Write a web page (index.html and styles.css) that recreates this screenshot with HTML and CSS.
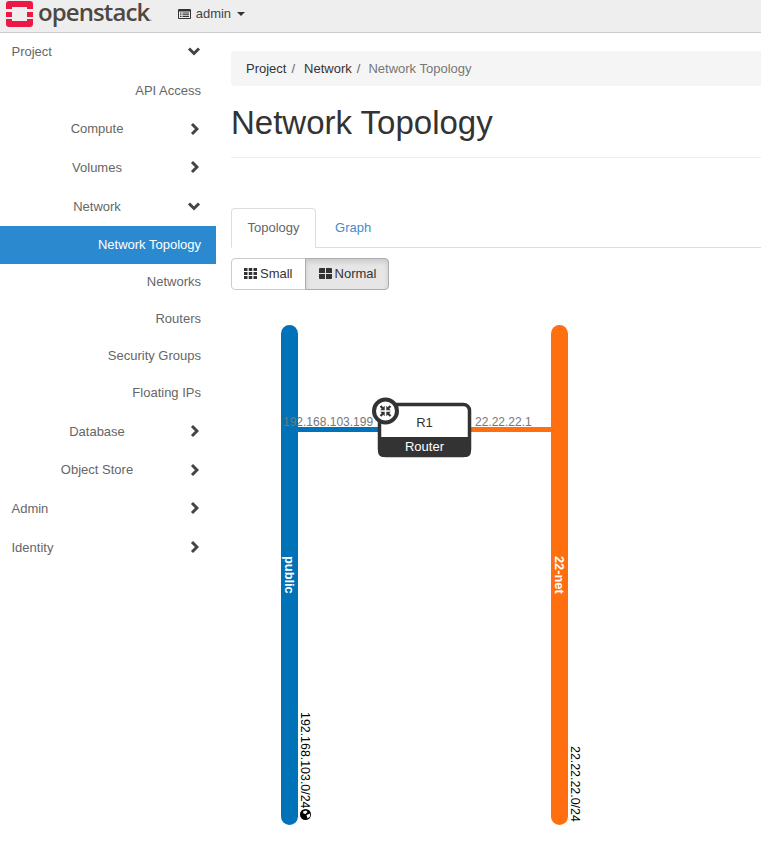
FILE: index.html
```html
<!DOCTYPE html>
<html lang="en">

<head>
    <meta charset="UTF-8">
    <meta name="viewport" content="width=device-width, initial-scale=1.0">
    <title>Network Topology</title>

    <link rel="stylesheet" href="styles.css">
</head>

<body>
    <header class="navbar">
        <svg class="logo-mark" width="27" height="26" viewBox="0 0 27 26">
            <path fill="#ed1944" d="M3 0H24Q27 0 27 3V8H21V6H6V8H0V3Q0 0 3 0ZM0 11H6V16H0ZM21 11H27V16H21ZM0 18H6V20H21V18H27V23Q27 26 24 26H3Q0 26 0 23Z"/>
        </svg>
        <span class="logo-text">openstack<small>.</small></span>
        <a class="project-menu" href="#">
            <svg width="13" height="10" viewBox="0 0 13 10">
                <path fill="#333" fill-rule="evenodd" d="M1 0H12Q13 0 13 1V9Q13 10 12 10H1Q0 10 0 9V1Q0 0 1 0ZM1 2.500V9H12V2.500ZM2 3.500H3.500V4.500H2ZM4.500 3.500H11V4.500H4.500ZM2 5.250H3.500V6.250H2ZM4.500 5.250H11V6.250H4.500ZM2 7H3.500V8H2ZM4.500 7H11V8H4.500Z"/>
            </svg>
            <span>admin</span>
            <i class="caret"></i>
        </a>
    </header>

    <div class="page">
        <nav class="sidebar">
            <a class="nav-row top first" href="#">Project <svg class="chev down" width="14" height="10" viewBox="0 0 14 10"><path d="M2 2.500L7 7.500L12 2.500"/></svg></a>
            <a class="nav-row leaf" href="#">API Access</a>
            <a class="nav-row group" href="#"><span>Compute</span> <svg class="chev right" width="10" height="14" viewBox="0 0 10 14"><path d="M3 2L8 7L3 12"/></svg></a>
            <a class="nav-row group" href="#"><span>Volumes</span> <svg class="chev right" width="10" height="14" viewBox="0 0 10 14"><path d="M3 2L8 7L3 12"/></svg></a>
            <a class="nav-row group" href="#"><span>Network</span> <svg class="chev down" width="14" height="10" viewBox="0 0 14 10"><path d="M2 2.500L7 7.500L12 2.500"/></svg></a>
            <a class="nav-sub active" href="#">Network Topology</a>
            <a class="nav-sub" href="#">Networks</a>
            <a class="nav-sub" href="#">Routers</a>
            <a class="nav-sub" href="#">Security Groups</a>
            <a class="nav-sub" href="#">Floating IPs</a>
            <a class="nav-row group" href="#"><span>Database</span> <svg class="chev right" width="10" height="14" viewBox="0 0 10 14"><path d="M3 2L8 7L3 12"/></svg></a>
            <a class="nav-row group" href="#"><span>Object Store</span> <svg class="chev right" width="10" height="14" viewBox="0 0 10 14"><path d="M3 2L8 7L3 12"/></svg></a>
            <a class="nav-row top" href="#">Admin <svg class="chev right" width="10" height="14" viewBox="0 0 10 14"><path d="M3 2L8 7L3 12"/></svg></a>
            <a class="nav-row top" href="#">Identity <svg class="chev right" width="10" height="14" viewBox="0 0 10 14"><path d="M3 2L8 7L3 12"/></svg></a>
        </nav>

        <main class="content">
            <ol class="breadcrumb">
                <li>Project</li>
                <li>Network</li>
                <li class="current">Network Topology</li>
            </ol>

            <h1 class="page-title">Network Topology</h1>

            <ul class="tabs">
                <li class="tab selected">Topology</li>
                <li class="tab">Graph</li>
            </ul>

            <div class="btn-group">
                <button type="button" class="btn">
                    <svg width="13" height="11" viewBox="0 0 13 11">
                        <path fill="#333" d="M0 0H3.500V3H0ZM4.750 0H8.250V3H4.750ZM9.500 0H13V3H9.500ZM0 4H3.500V7H0ZM4.750 4H8.250V7H4.750ZM9.500 4H13V7H9.500ZM0 8H3.500V11H0ZM4.750 8H8.250V11H4.750ZM9.500 8H13V11H9.500Z"/>
                    </svg>
                    Small
                </button>
                <button type="button" class="btn pressed">
                    <svg width="13" height="11" viewBox="0 0 13 11">
                        <path fill="#333" d="M1 0H6V5H0V1Q0 0 1 0ZM7 0H12Q13 0 13 1V5H7ZM0 6H6V11H1Q0 11 0 10ZM7 6H13V10Q13 11 12 11H7Z"/>
                    </svg>
                    Normal
                </button>
            </div>

            <svg class="topology" width="530" height="540" viewBox="231 290 530 540">
                <rect x="298" y="427" width="82" height="5" fill="#0072b8"/>
                <rect x="470" y="427" width="81" height="5" fill="#ff6e0f"/>

                <rect x="281" y="325" width="17" height="500" rx="8.500" fill="#0072b8"/>
                <rect x="551" y="325" width="17" height="500" rx="8.500" fill="#ff6e0f"/>

                <text class="net-name" transform="translate(285 556) rotate(90)">public</text>
                <text class="net-name" transform="translate(555 556) rotate(90)">22-net</text>

                <text class="cidr" transform="translate(301 712) rotate(90)">192.168.103.0/24</text>
                <text class="cidr" transform="translate(571 746) rotate(90)">22.22.22.0/24</text>

                <circle cx="305.500" cy="814.500" r="5.500" fill="#000"/>
                <path fill="#fff" d="M303 811.500L306 810.500L307.500 812L305.500 814L303.500 813.500ZM306.500 815L310 813.500L310 816.500L307.500 818.500Z"/>

                <text class="port-ip" x="283" y="426">192.168.103.199</text>
                <text class="port-ip" x="475" y="426">22.22.22.1</text>

                <rect x="379.500" y="404.500" width="90" height="51" rx="6" fill="#fff" stroke="#333" stroke-width="3.500"/>
                <path fill="#333" d="M378 437H471V451Q471 457 465 457H384Q378 457 378 451Z"/>
                <text class="router-name" x="424.500" y="427">R1</text>
                <text class="router-type" x="424.500" y="451">Router</text>

                <circle cx="385.500" cy="411" r="11.500" fill="#fff" stroke="#333" stroke-width="4"/>
                <path fill="none" stroke="#333" stroke-width="2.200" d="M380.500 406L383 408.500M390.500 406L388 408.500M380.500 416L383 413.500M390.500 416L388 413.500"/>
                <path fill="#333" d="M384.700 410.200V405.700L380.200 410.200ZM386.300 410.200V405.700L390.800 410.200ZM384.700 411.800V416.300L380.200 411.800ZM386.300 411.800V416.300L390.800 411.800Z"/>
            </svg>
        </main>
    </div>
</body>

</html>
```

FILE: styles.css
```css
body {
    margin: 0;
    width: 761px;
    height: 842px;
    overflow: hidden;
    background-color: #fff;
    color: #333;
    font-family: 'Liberation Sans', Arial, sans-serif;
    font-size: 13px;
}

a {
    color: #666;
    text-decoration: none;
}

.navbar {
    display: flex;
    align-items: center;
    height: 33px;
    box-sizing: border-box;
    border-bottom: 1px solid #ccc;
    background-color: #eee;
    padding: 0 0 4px 6px;
}

.logo-mark {
    flex: none;
}

.logo-text {
    margin-left: 5px;
    color: #4e4843;
    font-family: 'Open Sans', sans-serif;
    font-size: 24px;
    font-weight: 600;
    line-height: 28px;
    letter-spacing: -0.9px;
}

.logo-text small {
    color: #999;
    font-size: 10px;
}

.project-menu {
    display: flex;
    align-items: center;
    gap: 5px;
    margin-left: 26.500px;
    margin-bottom: 1px;
    color: #444;
}

.caret {
    width: 0;
    height: 0;
    margin-left: 1px;
    border-top: 4px solid #333;
    border-left: 4.500px solid transparent;
    border-right: 4.500px solid transparent;
}

.page {
    display: flex;
}

.sidebar {
    flex: none;
    width: 216px;
}

.nav-row {
    display: flex;
    align-items: center;
    height: 38.600px;
    padding-right: 15px;
    box-sizing: border-box;
}

.nav-row.first {
    height: 38px;
    padding-bottom: 2px;
}

.nav-row.top {
    justify-content: space-between;
    padding-left: 11.500px;
}

.nav-row.leaf {
    justify-content: flex-end;
}

.nav-row.group {
    justify-content: flex-end;
}

.nav-row.group span {
    flex: 1;
    padding-left: 5px;
    text-align: center;
}

.nav-row.group .chev.down {
    margin-left: -2px;
}

.chev {
    flex: none;
}

.chev.right {
    margin-right: 2px;
}

.chev path {
    fill: none;
    stroke: #444;
    stroke-width: 3;
}

.nav-sub {
    display: block;
    height: 37px;
    line-height: 35px;
    padding-right: 15px;
    text-align: right;
}

.nav-sub.active {
    height: 38px;
    margin-top: 0.600px;
    line-height: 37px;
    background-color: #2b89d0;
    color: #fff;
}

.content {
    flex: none;
    width: 530px;
    margin-left: 15px;
    padding-top: 18px;
}

.breadcrumb {
    display: flex;
    height: 35px;
    margin: 0;
    padding: 0 0 0 15px;
    align-items: center;
    list-style: none;
    background-color: #f5f5f5;
    border-radius: 4px 0 0 4px;
}

.breadcrumb li:not(.current)::after {
    content: "/";
    padding: 0 9px 0 5px;
    color: #666;
}

.breadcrumb .current {
    margin-left: -1px;
    color: #777;
}

.page-title {
    margin: 0;
    padding: 17px 0 15px;
    border-bottom: 1px solid #eee;
    font-size: 33px;
    font-weight: 400;
    line-height: 39px;
}

.tabs {
    display: flex;
    margin: 50px 0 0;
    padding: 0;
    list-style: none;
    border-bottom: 1px solid #ddd;
}

.tab {
    height: 39px;
    line-height: 40px;
    padding: 0 19px 0 19px;
    color: #428bca;
}

.tab.selected {
    box-sizing: border-box;
    height: 40px;
    line-height: 38px;
    margin-bottom: -1px;
    padding: 0 15.500px;
    border: 1px solid #ddd;
    border-bottom-color: #fff;
    border-radius: 4px 4px 0 0;
    color: #666;
}

.btn-group {
    display: flex;
    margin-top: 10px;
}

.btn {
    display: flex;
    align-items: center;
    gap: 3px;
    height: 32px;
    padding: 0 12px 1px;
    border: 1px solid #ccc;
    border-radius: 4px 0 0 4px;
    background-color: #fff;
    color: #333;
    font-family: inherit;
    font-size: 13px;
}

.btn.pressed {
    margin-left: -1px;
    padding-left: 13px;
    border-color: #adadad;
    border-radius: 0 4px 4px 0;
    background-color: #e6e6e6;
    box-shadow: inset 0 3px 5px rgba(0, 0, 0, 0.125);
}

.topology {
    display: block;
}

.topology text {
    font-family: 'Liberation Sans', Arial, sans-serif;
    font-size: 12px;
}

.topology .net-name {
    fill: #fff;
    font-size: 12.800px;
    font-weight: 700;
}

.topology .cidr {
    fill: #000;
    font-size: 12.400px;
}

.port-ip {
    fill: #777;
}

.topology .router-name {
    fill: #333;
    font-size: 13px;
    text-anchor: middle;
}

.topology .router-type {
    fill: #fff;
    font-size: 13px;
    text-anchor: middle;
}
```
